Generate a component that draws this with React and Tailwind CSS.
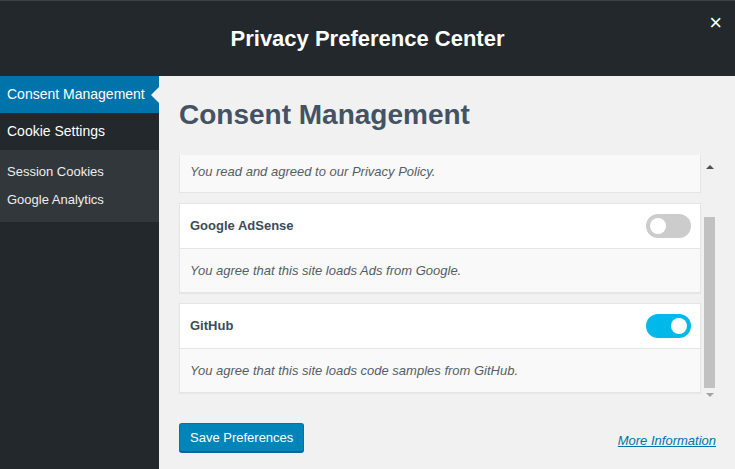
import React, { useState } from 'react';

const font = { fontFamily: '"Liberation Sans", Arial, sans-serif' };

function Toggle({ on, onChange }) {
  return (
    <button
      type="button"
      onClick={onChange}
      className={`flex h-[24px] w-[45px] items-center rounded-full px-[4px] ${
        on ? 'justify-end bg-[#00b9eb]' : 'justify-start bg-[#cccccc]'
      }`}
    >
      <span className="block h-[16px] w-[16px] rounded-full bg-white" />
    </button>
  );
}

function ServiceCard({ name, description, on, onToggle }) {
  return (
    <div className="border border-[#e5e5e5] bg-white shadow-[0_1px_1px_rgba(0,0,0,0.04)]">
      <div className="flex h-[44px] items-center justify-between pl-[10px] pr-[9px]">
        <span className="text-[13px] font-bold text-[#3c4b5a]">{name}</span>
        <Toggle on={on} onChange={onToggle} />
      </div>
      <div className="flex h-[44px] items-center border-t border-[#e5e5e5] bg-[#f9f9f9] pl-[10px] text-[13px] italic text-[#555d66]">
        {description}
      </div>
    </div>
  );
}

export default function App() {
  const [services, setServices] = useState({ adsense: false, github: true });

  const toggle = (key) => setServices((prev) => ({ ...prev, [key]: !prev[key] }));

  return (
    <div className="flex h-[469px] w-[735px] flex-col overflow-hidden bg-[#f1f1f1]" style={font}>
      {/* header */}
      <div className="relative flex h-[76px] shrink-0 items-center justify-center border-t border-[#3c4146] bg-[#23282d]">
        <h1 className="text-[22px] font-bold text-white">Privacy Preference Center</h1>
        <button type="button" className="absolute right-[13px] top-[11px] text-[22px] leading-none text-white">
          ×
        </button>
      </div>

      <div className="flex flex-1">
        {/* sidebar */}
        <div className="w-[159px] shrink-0 bg-[#23282d] text-white">
          <div className="relative flex h-[37px] items-center bg-[#0073aa] pl-[7px] text-[14px]">
            Consent Management
            <span className="absolute right-0 top-[11px] h-0 w-0 border-y-[8px] border-r-[8px] border-y-transparent border-r-[#f1f1f1]" />
          </div>
          <div className="flex h-[37px] items-center pl-[7px] text-[14px]">Cookie Settings</div>
          <div className="flex flex-col bg-[#32373c] pb-[8px] pt-[8px] text-[13px] text-[#eeeeee]">
            <div className="flex h-[28px] items-center pl-[7px]">Session Cookies</div>
            <div className="flex h-[28px] items-center pl-[7px]">Google Analytics</div>
          </div>
        </div>

        {/* main */}
        <div className="flex flex-1 flex-col pl-[20px] pr-[19px]">
          <h2 className="mt-[22px] h-[57px] text-[28px] font-bold leading-[34px] text-[#435364]">Consent Management</h2>

          <div className="flex h-[245px]">
            <div className="flex w-[522px] flex-col gap-[10px] overflow-hidden">
              <div className="flex h-[38px] shrink-0 items-start border-x border-b border-[#e5e5e5] bg-[#f9f9f9] pl-[10px] pt-[7px] text-[13px] italic text-[#555d66]">
                You read and agreed to our Privacy Policy.
              </div>
              <ServiceCard
                name="Google AdSense"
                description="You agree that this site loads Ads from Google."
                on={services.adsense}
                onToggle={() => toggle('adsense')}
              />
              <ServiceCard
                name="GitHub"
                description="You agree that this site loads code samples from GitHub."
                on={services.github}
                onToggle={() => toggle('github')}
              />
            </div>

            {/* scrollbar */}
            <div className="ml-[3px] flex w-[11px] flex-col items-center">
              <div className="flex h-[14px] items-end justify-center">
                <span className="h-0 w-0 border-x-[4px] border-b-[4px] border-x-transparent border-b-[#505050]" />
              </div>
              <div className="mt-[48px] h-[171px] w-[11px] bg-[#c1c1c1]" />
              <div className="mt-[5px] flex justify-center">
                <span className="h-0 w-0 border-x-[4px] border-t-[4px] border-x-transparent border-t-[#a3a3a3]" />
              </div>
            </div>
          </div>

          <div className="mt-[23px] flex items-center justify-between">
            <button
              type="button"
              className="h-[29px] rounded-[3px] border border-[#0073aa] border-b-[#006799] bg-[#0085ba] px-[10px] text-[13px] text-white shadow-[0_1px_0_#006799]"
            >
              Save Preferences
            </button>
            <a href="#" className="mt-[6px] text-[13px] italic text-[#0073aa] underline">
              More Information
            </a>
          </div>
        </div>
      </div>
    </div>
  );
}
